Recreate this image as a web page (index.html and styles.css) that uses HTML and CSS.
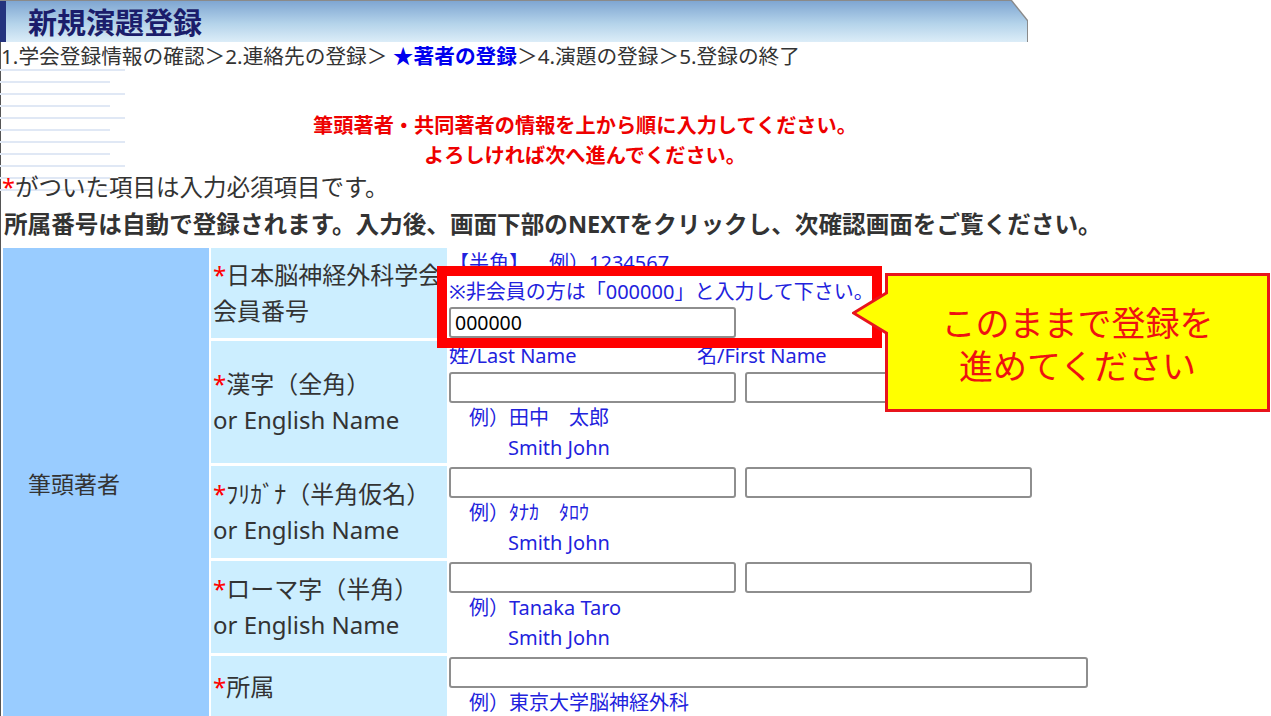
FILE: index.html
```html
<!DOCTYPE html>
<html lang="ja">
<head>
  <meta charset="UTF-8">
  <meta name="viewport" content="width=device-width, initial-scale=1.0">
  <title>新規演題登録</title>
  <link rel="stylesheet" href="styles.css">
</head>
<body>
  <div class="page">
    <div class="page-head">
      <div class="page-head-inner">
        <h1 class="page-title">新規演題登録</h1>
      </div>
    </div>
    <p class="steps">1.学会登録情報の確認＞2.連絡先の登録＞ <b class="steps-now">★著者の登録</b>＞4.演題の登録＞5.登録の終了</p>

    <div class="intro">
      <p class="intro-lead">筆頭著者・共同著者の情報を上から順に入力してください。<br>よろしければ次へ進んでください。</p>
      <p class="intro-note"><span class="req">*</span>がついた項目は入力必須項目です。</p>
      <p class="intro-info">所属番号は自動で登録されます。入力後、画面下部のNEXTをクリックし、次確認画面をご覧ください。</p>
    </div>

    <table class="author-table">
      <colgroup>
        <col class="col-role">
        <col class="col-field">
        <col>
      </colgroup>
      <tr>
        <th class="role" rowspan="5">筆頭著者</th>
        <th class="field"><span class="req">*</span>日本脳神経外科学会<br>会員番号</th>
        <td class="entry">
          <div class="hint hint-tight">【半角】　例）1234567</div>
          <div class="hint hint-tight">※非会員の方は「000000」と入力して下さい。</div>
          <input class="text-box" type="text" value="000000">
        </td>
      </tr>
      <tr>
        <th class="field"><span class="req">*</span>漢字（全角）<br>or English Name</th>
        <td class="entry">
          <div class="hint"><span class="name-last">姓/Last Name</span>名/First Name</div>
          <div class="pair">
            <input class="text-box" type="text">
            <input class="text-box" type="text">
          </div>
          <div class="hint example">例）田中　太郎</div>
          <div class="hint example-alt">Smith John</div>
        </td>
      </tr>
      <tr>
        <th class="field"><span class="req">*</span>ﾌﾘｶﾞﾅ（半角仮名）<br>or English Name</th>
        <td class="entry">
          <div class="pair">
            <input class="text-box" type="text">
            <input class="text-box" type="text">
          </div>
          <div class="hint example">例）ﾀﾅｶ　ﾀﾛｳ</div>
          <div class="hint example-alt">Smith John</div>
        </td>
      </tr>
      <tr>
        <th class="field"><span class="req">*</span>ローマ字（半角）<br>or English Name</th>
        <td class="entry">
          <div class="pair">
            <input class="text-box" type="text">
            <input class="text-box" type="text">
          </div>
          <div class="hint example">例）Tanaka Taro</div>
          <div class="hint example-alt">Smith John</div>
        </td>
      </tr>
      <tr>
        <th class="field"><span class="req">*</span>所属</th>
        <td class="entry">
          <div class="pair">
            <input class="text-box text-box-wide" type="text">
          </div>
          <div class="hint example">例）東京大学脳神経外科</div>
        </td>
      </tr>
    </table>

    <!-- annotation laid over the form -->
    <div class="focus-frame"></div>
    <div class="callout">
      <svg class="callout-tail" viewBox="0 0 36 46" width="36" height="46">
        <polygon points="36,2 1.5,23 36,44" fill="#ffff00"/>
        <polyline points="36,2 1.5,23 36,44" fill="none" stroke="#e8141c" stroke-width="3"/>
      </svg>
      <p class="callout-text">このままで登録を<br>進めてください</p>
    </div>
  </div>
</body>
</html>
```

FILE: styles.css
```css
* {
  box-sizing: border-box;
}

body {
  margin: 0;
  font-family: "Noto Sans", "Noto Sans CJK JP", sans-serif;
  color: #333333;
  background: #ffffff;
  text-spacing-trim: space-all;
}

.page {
  position: relative;
  min-height: 100vh;
  overflow: hidden;
  box-shadow: inset 1px 0 #555555;
}

/* title bar */
.page-head {
  width: 1028px;
  height: 42px;
  padding: 1px 1px 0 0;
  background: #8a8a8a;
  clip-path: polygon(0 0, 1012px 0, 100% 20px, 100% 100%, 0 100%);
}

.page-head-inner {
  height: 100%;
  padding-left: 22px;
  border-left: 6px solid #24337e;
  background: linear-gradient(#7fa6d2, #b4d3ea 55%, #dcedf8);
  clip-path: polygon(0 0, 1011px 0, 100% 20px, 100% 100%, 0 100%);
}

.page-title {
  margin: 0;
  font-size: 29px;
  line-height: 41px;
  font-weight: bold;
  color: #1b1d6b;
  font-family: "Noto Sans CJK JP", sans-serif;
}

.steps {
  margin: 1px 0 0;
  padding-left: 1px;
  font-size: 20.7px;
  line-height: 26px;
  white-space: nowrap;
}

.steps-now {
  color: #0000ee;
}

/* intro text with the striped corner */
.intro {
  width: 1170px;
  background:
    repeating-linear-gradient(#e0e8f5 0 2px, transparent 2px 24px) 0 0 / 125px 125px no-repeat,
    repeating-linear-gradient(#e0e8f5 0 2px, transparent 2px 24px) 0 12px / 110px 115px no-repeat;
}

.intro-lead {
  margin: 0;
  padding-top: 41px;
  text-align: center;
  color: #ee0000;
  font-weight: bold;
  font-size: 20.2px;
  line-height: 30px;
}

.intro-note {
  margin: 0;
  padding-left: 2px;
  font-size: 23.5px;
  line-height: 34px;
}

.intro-info {
  margin: 0;
  padding-left: 4px;
  font-weight: bold;
  font-size: 23.6px;
  line-height: 41px;
  white-space: nowrap;
}

.req {
  color: #ff0000;
}

/* author table */
.author-table {
  width: 1172px;
  margin-left: 1px;
  border-collapse: separate;
  border-spacing: 2px 3px;
  table-layout: fixed;
}

.col-role {
  width: 206px;
}

.col-field {
  width: 236px;
}

.role {
  padding: 0 0 0 25px;
  background: #99ccff;
  text-align: left;
  font-weight: normal;
  font-size: 23px;
  vertical-align: middle;
}

.field {
  padding: 0 0 0 2px;
  background: #cceeff;
  text-align: left;
  font-weight: normal;
  font-size: 24px;
  line-height: 36px;
  white-space: nowrap;
  vertical-align: middle;
}

.entry {
  padding: 0;
  vertical-align: top;
}

.hint {
  color: #2222dd;
  font-size: 20px;
  line-height: 30px;
  white-space: nowrap;
}

.hint-tight {
  line-height: 29px;
}

.name-last {
  display: inline-block;
  width: 248px;
}

.example {
  padding-left: 20px;
}

.example-alt {
  padding-left: 59px;
}

.pair {
  display: flex;
  gap: 9px;
}

.text-box {
  display: block;
  width: 287px;
  height: 31px;
  margin: 1px 0 0;
  padding: 0 4px;
  border: 2px solid #8e8e8e;
  border-radius: 3px;
  background: #ffffff;
  color: #000000;
  font-family: "Noto Sans", sans-serif;
  font-size: 19.5px;
}

.text-box-wide {
  width: 639px;
}

/* annotation */
.focus-frame {
  position: absolute;
  left: 437px;
  top: 266px;
  width: 445px;
  height: 82px;
  border: 10px solid #ff0000;
}

.callout {
  position: absolute;
  left: 885px;
  top: 273px;
  width: 385px;
  height: 139px;
  display: flex;
  align-items: center;
  justify-content: center;
  border: 3px solid #e8141c;
  background: #ffff00;
}

.callout-tail {
  position: absolute;
  left: -36px;
  top: 14px;
}

.callout-text {
  margin: 0;
  text-align: center;
  color: #ee1111;
  font-family: "Noto Sans CJK JP", sans-serif;
  font-size: 34px;
  line-height: 43px;
}
```
